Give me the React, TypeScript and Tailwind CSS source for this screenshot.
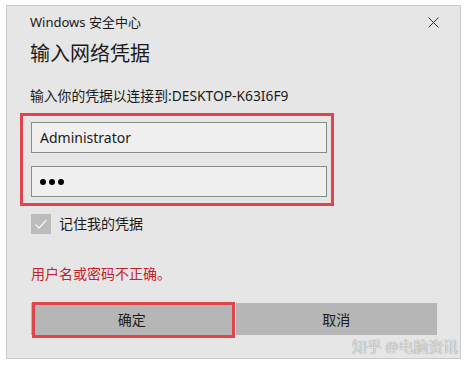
import React from 'react';

const font = { fontFamily: '"Noto Sans", "Noto Sans CJK SC", sans-serif' };

export default function App() {
  return (
    <div className="relative w-[468px] h-[366px] bg-white pt-[5px] pl-[6px]" style={font}>
      <div className="w-[455px] h-[354px] border border-[#c9c9c9] bg-[#e6e6e6] pl-[24px] pr-[23px] text-[#1a1a1a]">
        {/* title bar */}
        <div className="flex items-center justify-between h-[30px] pt-[2px] -ml-[1px]">
          <span className="text-[13px] leading-[20px]">Windows 安全中心</span>
          <svg width="11" height="11" viewBox="0 0 11 11" className="mr-[-2px]">
            <path d="M0.5 0.5 L10.5 10.5 M10.5 0.5 L0.5 10.5" stroke="#333" strokeWidth="1" />
          </svg>
        </div>
        <h1 className="mt-[4px] -ml-[1px] text-[20px] leading-[28px]">输入网络凭据</h1>
        <p className="mt-[19px] -ml-[1px] text-[13.8px] leading-[18px]">输入你的凭据以连接到:DESKTOP-K63I6F9</p>

        {/* highlighted credentials */}
        <div className="mt-[8px] -ml-[11px] w-[314px] border-[3px] border-[#e0454a] pl-[8px] pr-[4px] py-[6px] flex flex-col gap-[13px]">
          <div className="h-[31px] border border-[#8a8a8a] bg-[#f0f0f0] flex items-center pl-[8px] text-[14px]">
            Administrator
          </div>
          <div className="h-[31px] border border-[#8a8a8a] bg-[#f0f0f0] flex items-center pl-[8px] gap-[3px]">
            <span className="w-[6px] h-[6px] rounded-full bg-black" />
            <span className="w-[6px] h-[6px] rounded-full bg-black" />
            <span className="w-[6px] h-[6px] rounded-full bg-black" />
          </div>
        </div>

        <div className="mt-[8px] flex items-center gap-[8px]">
          <div className="w-[20px] h-[20px] bg-[#bcbcbc] flex items-center justify-center">
            <svg width="14" height="14" viewBox="0 0 14 14">
              <path d="M1.5 7.5 L5 11 L12.5 3" fill="none" stroke="#f4f4f4" strokeWidth="1.3" />
            </svg>
          </div>
          <span className="text-[14px] leading-[20px]">记住我的凭据</span>
        </div>

        <p className="mt-[30px] text-[14px] leading-[20px] text-[#c4222a]">用户名或密码不正确。</p>

        <div className="mt-[19px] grid grid-cols-2 gap-[3px] h-[32px] text-[14px]">
          <div className="relative bg-[#b6b6b6] flex items-center justify-center">
            确定
            <span className="absolute -top-[1px] -bottom-[3px] left-[1px] -right-[2px] border-[3px] border-[#e0454a]" />
          </div>
          <div className="bg-[#b6b6b6] flex items-center justify-center">取消</div>
        </div>
      </div>

      <span
        className="absolute left-[352px] top-[336px] text-[15px] leading-[20px] text-[#dedede] tracking-[-0.2px]"
        style={{ textShadow: '0 0 1px #7a7a7a' }}
      >
        知乎 @电脑资讯
      </span>
    </div>
  );
}
